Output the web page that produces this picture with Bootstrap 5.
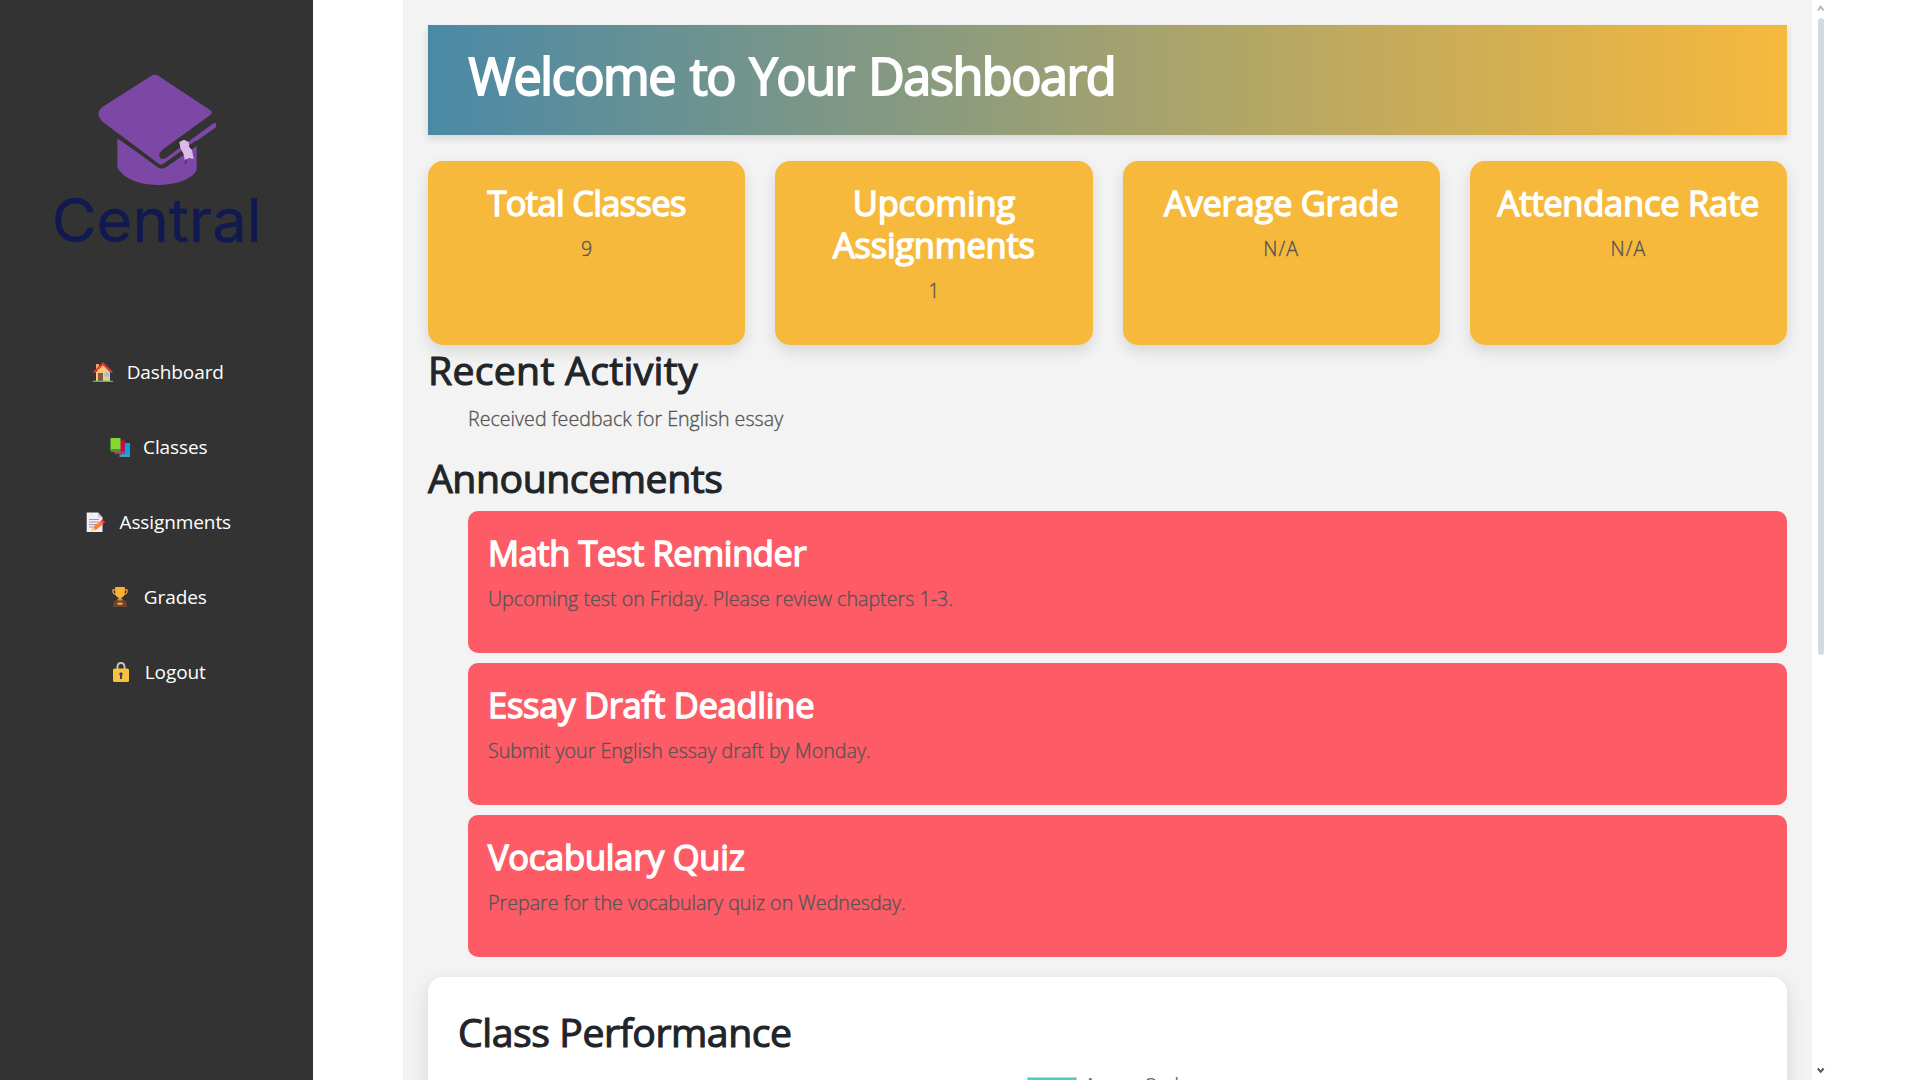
<!DOCTYPE html>
<html lang="en">
<head>
<meta charset="utf-8">
<title>Central - Dashboard</title>
<link href="https://cdn.jsdelivr.net/npm/bootstrap@5.3.0/dist/css/bootstrap.min.css" rel="stylesheet">
<style>
  body { font-family: "Open Sans", "Noto Sans", sans-serif; background: #fff; }
  .side-panel { width: 313px; background: #333; padding-top: 60px; }
  .brand-logo { width: 240px; height: 200px; margin-left: 7px; }
  .side-nav { margin-top: 74px; padding-left: 4px; }
  .side-nav .nav-link { height: 75px; gap: 13.5px; padding: 0; color: #fff; font-size: 19px; line-height: 28px; letter-spacing: -.1px; }
  .side-nav .nav-link:hover { color: #fff; }
  .side-nav svg { width: 20px; height: 20px; flex: none; }
  .page-gutter { width: 90px; }
  .main-pane { width: 1409px; background: #f3f3f3; padding: 25px 25px 0; }
  h1, h2, h3 { font-weight: 400; margin: 0; }
  .welcome { height: 110px; padding: 20px 40px; color: #fff; background: linear-gradient(to right, #4a89a6, #f7b93c); box-shadow: 0 4px 8px rgba(0,0,0,.12); }
  .welcome h1 { font-size: 50.4px; line-height: 61px; letter-spacing: -1.48px; word-spacing: 3px; padding-left: .5px; -webkit-text-stroke: 1.9px #fff; }
  .stat-row { gap: 30px; margin-top: 26px; height: 184px; }
  .stat-box { background: #f7b93c; border-radius: 15px; padding: 21px 20px; box-shadow: 0 6px 15px rgba(0,0,0,.12); flex: 1 1 0; min-width: 0; }
  h3 { font-size: 34.5px; line-height: 42px; color: #fff; letter-spacing: -.25px; -webkit-text-stroke: 1.4px #fff; }
  h2 { font-size: 39.2px; line-height: 48px; color: #212529; letter-spacing: -.44px; -webkit-text-stroke: 1.1px #212529; }
  .soft-text { font-size: 19.6px; line-height: 30px; font-weight: 300; color: #555; margin: 0; letter-spacing: .03px; -webkit-text-stroke: .35px #555; }
  .stat-box .soft-text, .notice .soft-text { margin-top: 10px; }
  .track-loose { letter-spacing: .28px; }
  .track-wide { letter-spacing: 1px; }
  .track-snug { letter-spacing: -.42px; }
  .track-tight { letter-spacing: -.68px; }
  .recent-head { margin-top: 1px; }
  .indent { padding-left: 40px; }
  .recent-text { margin-top: 10px; }
  .announce-head { margin-top: 20px; }
  .notice-list { gap: 10px; margin-top: 9px; }
  .notice { height: 142px; border-radius: 10px; background: #fd5c66; padding: 21px 20px; }
  .perf-panel { margin-top: 20px; height: 300px; background: #fff; border-radius: 15px; padding: 31px 30px; box-shadow: 0 6px 20px rgba(0,0,0,.12); }
  .legend-line { margin-top: 21px; gap: 8px; padding-right: 1px; font: 15px/16px "Liberation Sans", Arial, sans-serif; color: #666; }
  .legend-line span + span { margin-top: -2px; }
  .legend-swatch { width: 50px; height: 15px; background: #4ecdc4; border: 1px solid #9fe3de; }
  .scroll-track { width: 18px; padding: 5px 0 6px 5px; }
  .scroll-track svg { width: 8px; height: 7px; display: block; }
  .scroll-thumb { width: 6px; height: 637px; margin: 6px 0 0 1px; border-radius: 3px; background: #d0dbe3; }
</style>
</head>
<body>
<div class="d-flex vh-100 overflow-hidden">
  <aside class="side-panel flex-shrink-0 d-flex flex-column align-items-center">
    <svg class="brand-logo flex-shrink-0" viewBox="0 0 720 600">
      <path d="M232 235L352 319Q365 331 380 320L470 258V330C458 356 412 375 352 375C288 375 246 350 232 322Z" fill="#7d47a6"/>
      <path d="M333 48Q344 40 356 48L510 150Q521 158 510 166L366 270Q356 280 358 290Q364 302 378 294L520 190Q527 186 528 192V202L372 311Q363 317 354 311L186 184Q164 160 186 142Z" fill="#7d47a6"/>
      <path d="M232 226L354 316Q364 324 374 316L470 247" fill="none" stroke="#333" stroke-width="11"/>
      <path d="M418 246L432 239L446 246L448 262L456 270L461 297L448 294L434 299L431 283L421 264Z" fill="#dcbaec"/>
      <path d="M439 300L435 312" stroke="#523268" stroke-width="4"/>
      <text x="35" y="545" font-family="Inter, sans-serif" font-size="180" fill="#101a50" stroke="#101a50" stroke-width="1" textLength="630" lengthAdjust="spacingAndGlyphs">Central</text>
    </svg>
    <nav class="side-nav nav flex-column w-100">
      <a class="nav-link d-flex align-items-center justify-content-center" href="#">
        <svg viewBox="0 0 20 20"><path d="M3 2h3v6H3z" fill="#e7a366"/><path d="M3 10l7-7 7 7v9H3z" fill="#ffc47c"/><path d="M.8 10.4L10 1.6l9.2 8.8" fill="none" stroke="#f3352e" stroke-width="1.8"/><path d="M5 11h5v8H5z" fill="#875445"/><path d="M11.5 10.5h4.5v4h-4.5z" fill="#82c4ff"/><path d="M0 18.7h20V20H0z" fill="#00e676"/></svg>
        <span>Dashboard</span></a>
      <a class="nav-link d-flex align-items-center justify-content-center" href="#">
        <svg viewBox="0 0 20 20"><path d="M12 6h8v12.5h-8z" fill="#00a6ed"/><path d="M9.5 17.5H20V20H9.5z" fill="#5c91b8"/><path d="M7 3.5h8v12H7z" fill="#ca0b4a"/><path d="M4.5 14.5H15V17H4.5z" fill="#a84268"/><path d="M1 1h9.5v11.5H1z" fill="#86d72f"/><path d="M0 2l1-1v11.5h9.5V15H1.5L0 13.5z" fill="#4c9135"/></svg>
        <span>Classes</span></a>
      <a class="nav-link d-flex align-items-center justify-content-center" href="#">
        <svg viewBox="0 0 20 20"><path d="M.7.5H12l4.5 5V20H.7z" fill="#f3eef8"/><path d="M12 .5l4.5 5H12z" fill="#cdc4d6"/><path d="M3 7.5h10M3 10h10M3 12.5h8M3 15h4" stroke="#a295b0" stroke-width="1"/><path d="M7 15l7.5-6 2.5 3.2-7.5 6z" fill="#ff822d"/><path d="M14.5 9l2-1.7 2.5 3-2 1.9z" fill="#f8315f"/><path d="M7 15l2.5 3.2-4.5 1.3z" fill="#ffce7c"/></svg>
        <span>Assignments</span></a>
      <a class="nav-link d-flex align-items-center justify-content-center" href="#">
        <svg viewBox="0 0 20 20"><path d="M6 3H3Q2.2 7.5 7 7.5M14 3h3q.8 4.5-4 4.5" fill="none" stroke="#e19747" stroke-width="1.5"/><path d="M5.2 0h9.6v6q0 3.500-3.300 4.500v3h-3v-3Q5.200 9.500 5.200 6z" fill="#ffb02e"/><path d="M7.500 11.500h5V14h-5z" fill="#d3883e"/><path d="M4 13.500h12l1.300 6.500H2.700z" fill="#6d4534"/><path d="M7.500 15.700h5v2h-5z" fill="#ffb02e"/></svg>
        <span>Grades</span></a>
      <a class="nav-link d-flex align-items-center justify-content-center" href="#">
        <svg viewBox="0 0 20 20"><path d="M6.500 8V5q0-4 3.500-4t3.500 4v3" fill="none" stroke="#c5c5c9" stroke-width="1.9"/><rect x="2" y="6.500" width="16" height="13.500" rx="1.6" fill="#f9c23c"/><path d="M10 10.200a1.900 1.900 0 0 1 1 3.400V17H9v-3.400a1.900 1.900 0 0 1 1-3.400z" fill="#433b6b"/></svg>
        <span>Logout</span></a>
    </nav>
  </aside>
  <div class="page-gutter flex-shrink-0"></div>
  <main class="main-pane flex-shrink-0 overflow-hidden">
    <header class="welcome"><h1>Welcome to Your Dashboard</h1></header>
    <section class="stat-row d-flex text-center">
      <div class="stat-box"><h3 class="track-tight">Total Classes</h3><p class="soft-text">9</p></div>
      <div class="stat-box"><h3>Upcoming Assignments</h3><p class="soft-text">1</p></div>
      <div class="stat-box"><h3>Average Grade</h3><p class="soft-text track-wide">N/A</p></div>
      <div class="stat-box"><h3 class="text-nowrap">Attendance Rate</h3><p class="soft-text track-wide">N/A</p></div>
    </section>
    <section>
      <h2 class="recent-head track-loose">Recent Activity</h2>
      <p class="soft-text indent recent-text">Received feedback for English essay</p>
    </section>
    <section>
      <h2 class="announce-head">Announcements</h2>
      <div class="notice-list indent d-flex flex-column">
        <article class="notice"><h3 class="track-snug">Math Test Reminder</h3><p class="soft-text">Upcoming test on Friday. Please review chapters 1-3.</p></article>
        <article class="notice"><h3>Essay Draft Deadline</h3><p class="soft-text">Submit your English essay draft by Monday.</p></article>
        <article class="notice"><h3>Vocabulary Quiz</h3><p class="soft-text">Prepare for the vocabulary quiz on Wednesday.</p></article>
      </div>
    </section>
    <section class="perf-panel">
      <h2>Class Performance</h2>
      <div class="legend-line d-flex justify-content-center"><span class="legend-swatch"></span><span>Average Grade</span></div>
    </section>
  </main>
  <div class="scroll-track flex-shrink-0 d-flex flex-column">
    <svg viewBox="0 0 8 7"><path d="M.8 5.500L3.700 1.700 6.600 5.500" fill="none" stroke="#b8b8b8" stroke-width="2"/></svg>
    <div class="scroll-thumb"></div>
    <svg class="mt-auto" viewBox="0 0 8 7"><path d="M.8 1.500L3.700 4.800 6.600 1.500" fill="none" stroke="#555" stroke-width="2"/></svg>
  </div>
</div>
<script src="https://cdn.jsdelivr.net/npm/bootstrap@5.3.0/dist/js/bootstrap.bundle.min.js"></script>
</body>
</html>
